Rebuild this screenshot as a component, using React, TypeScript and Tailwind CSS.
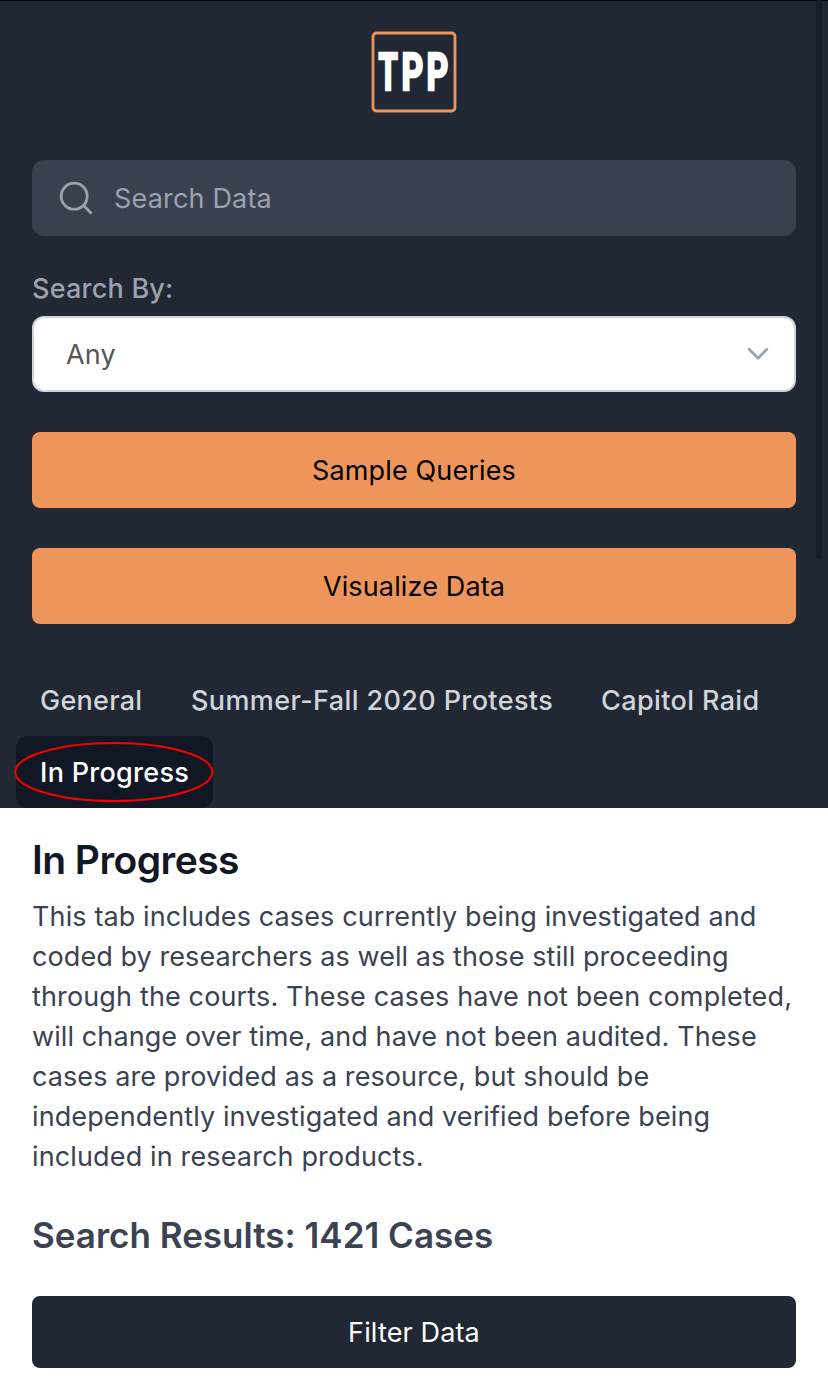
const tabs = [
  { label: "General", tracking: "tracking-[0.25px]", width: "w-[151px]", active: false },
  { label: "Summer-Fall 2020 Protests", tracking: "tracking-[0.38px]", width: "w-[410px]", active: false },
  { label: "Capitol Raid", tracking: "tracking-[0.38px]", width: "w-[206px]", active: false },
  { label: "In Progress", tracking: "tracking-[0.28px]", width: "w-[197px]", active: true },
];

const description = [
  { text: "This tab includes cases currently being investigated and", tracking: "tracking-[0.12px]" },
  { text: "coded by researchers as well as those still proceeding", tracking: "tracking-[0.08px]" },
  { text: "through the courts. These cases have not been completed,", tracking: "tracking-[0.14px]" },
  { text: "will change over time, and have not been audited. These", tracking: "tracking-[0.1px]" },
  { text: "cases are provided as a resource, but should be", tracking: "tracking-[0.09px]" },
  { text: "independently investigated and verified before being", tracking: "tracking-[0.1px]" },
  { text: "included in research products.", tracking: "tracking-[0.14px]" },
];

function Logo() {
  return (
    <svg width="86" height="82" viewBox="0 0 86 82" role="img" aria-label="TPP">
      <rect x="2" y="2" width="82" height="78" rx="3.5" fill="none" stroke="#ee955b" strokeWidth="2.8" />
      <g fill="#ffffff" stroke="#ffffff" strokeWidth="2.6" className="font-['Roboto',sans-serif] text-[51px] font-bold">
        <text transform="translate(7.6 58.7) scale(.61 1)">T</text>
        <text transform="translate(30.4 58.7) scale(.66 1)">P</text>
        <text transform="translate(55.4 58.7) scale(.66 1)">P</text>
      </g>
    </svg>
  );
}

export default function App() {
  return (
    <div className="relative h-[1400px] w-[828px] overflow-hidden bg-white font-['Inter',sans-serif] text-[27px] leading-10 tracking-[0.14px]">
      <header className="flex h-[808px] flex-col border-t border-black bg-[#212834]">
        <div className="mt-[30px] flex justify-center">
          <Logo />
        </div>
        <div className="mx-8 mt-[47px] flex h-[76px] items-center rounded-xl bg-[#3b4050] pl-[27px] text-[#9ca1af]">
          <svg width="34" height="34" viewBox="0 0 34 34" fill="none" stroke="currentColor" strokeWidth="2.8" strokeLinecap="round">
            <circle cx="15.2" cy="15.2" r="13" />
            <path d="M24.6 24.6 31.8 31.8" />
          </svg>
          <span className="ml-[21px] pt-0.5 tracking-[0.18px]">Search Data</span>
        </div>
        <div className="mx-8 mt-[33px] h-[47px] font-medium tracking-[0.22px] text-[#9ca1af]">Search By:</div>
        <div className="mx-8 flex h-[76px] items-center justify-between rounded-xl border-2 border-[#d1d4da] bg-white pr-[25px] pl-8 text-[#555555]">
          <span className="pt-0.5">Any</span>
          <svg width="22" height="14" viewBox="0 0 22 14" fill="none" stroke="#9ca3b0" strokeWidth="2.8" strokeLinecap="round" strokeLinejoin="round">
            <path d="M2.2 2.3 11 11.3 19.8 2.3" />
          </svg>
        </div>
        <button className="mx-8 mt-10 h-[76px] rounded-lg bg-[#ed955b] pt-0.5 text-black">Sample Queries</button>
        <button className="mx-8 mt-10 h-[76px] rounded-lg bg-[#ed955b] pt-0.5 text-black">Visualize Data</button>
        <nav className="mt-10 flex flex-wrap pl-4 font-medium">
          {tabs.map((tab) => (
            <a
              key={tab.label}
              className={`${tab.width} ${tab.tracking} flex h-[72px] items-center rounded-xl pt-0.5 pl-6 whitespace-nowrap ${
                tab.active ? "bg-[#111724] text-white" : "text-[#d1d4da]"
              }`}
            >
              {tab.label}
            </a>
          ))}
        </nav>
      </header>
      <main className="flex flex-col px-8">
        <h1 className="mt-8 text-[39px] leading-10 font-semibold tracking-[-0.55px] text-[#111724]">In Progress</h1>
        <p className="mt-[17px] text-[#3b4252]">
          {description.map((line) => (
            <span key={line.text} className={`${line.tracking} block whitespace-nowrap`}>
              {line.text}
            </span>
          ))}
        </p>
        <h2 className="mt-[37px] text-[35px] leading-[42px] font-semibold tracking-[0.01px] text-[#3b4252]">
          Search Results: 1421 Cases
        </h2>
        <button className="mt-10 h-[72px] rounded-lg bg-[#212834] pt-0.5 text-white">Filter Data</button>
      </main>
      <div className="absolute top-0 left-[816px] h-[559px] w-1.5 rounded-b-full bg-[#171c26]" />
      <svg className="absolute top-[741px] left-[13px]" width="201" height="62" viewBox="0 0 201 62" fill="none">
        <ellipse cx="100.8" cy="31" rx="98.5" ry="29" stroke="#f90000" strokeWidth="2" />
      </svg>
    </div>
  );
}
